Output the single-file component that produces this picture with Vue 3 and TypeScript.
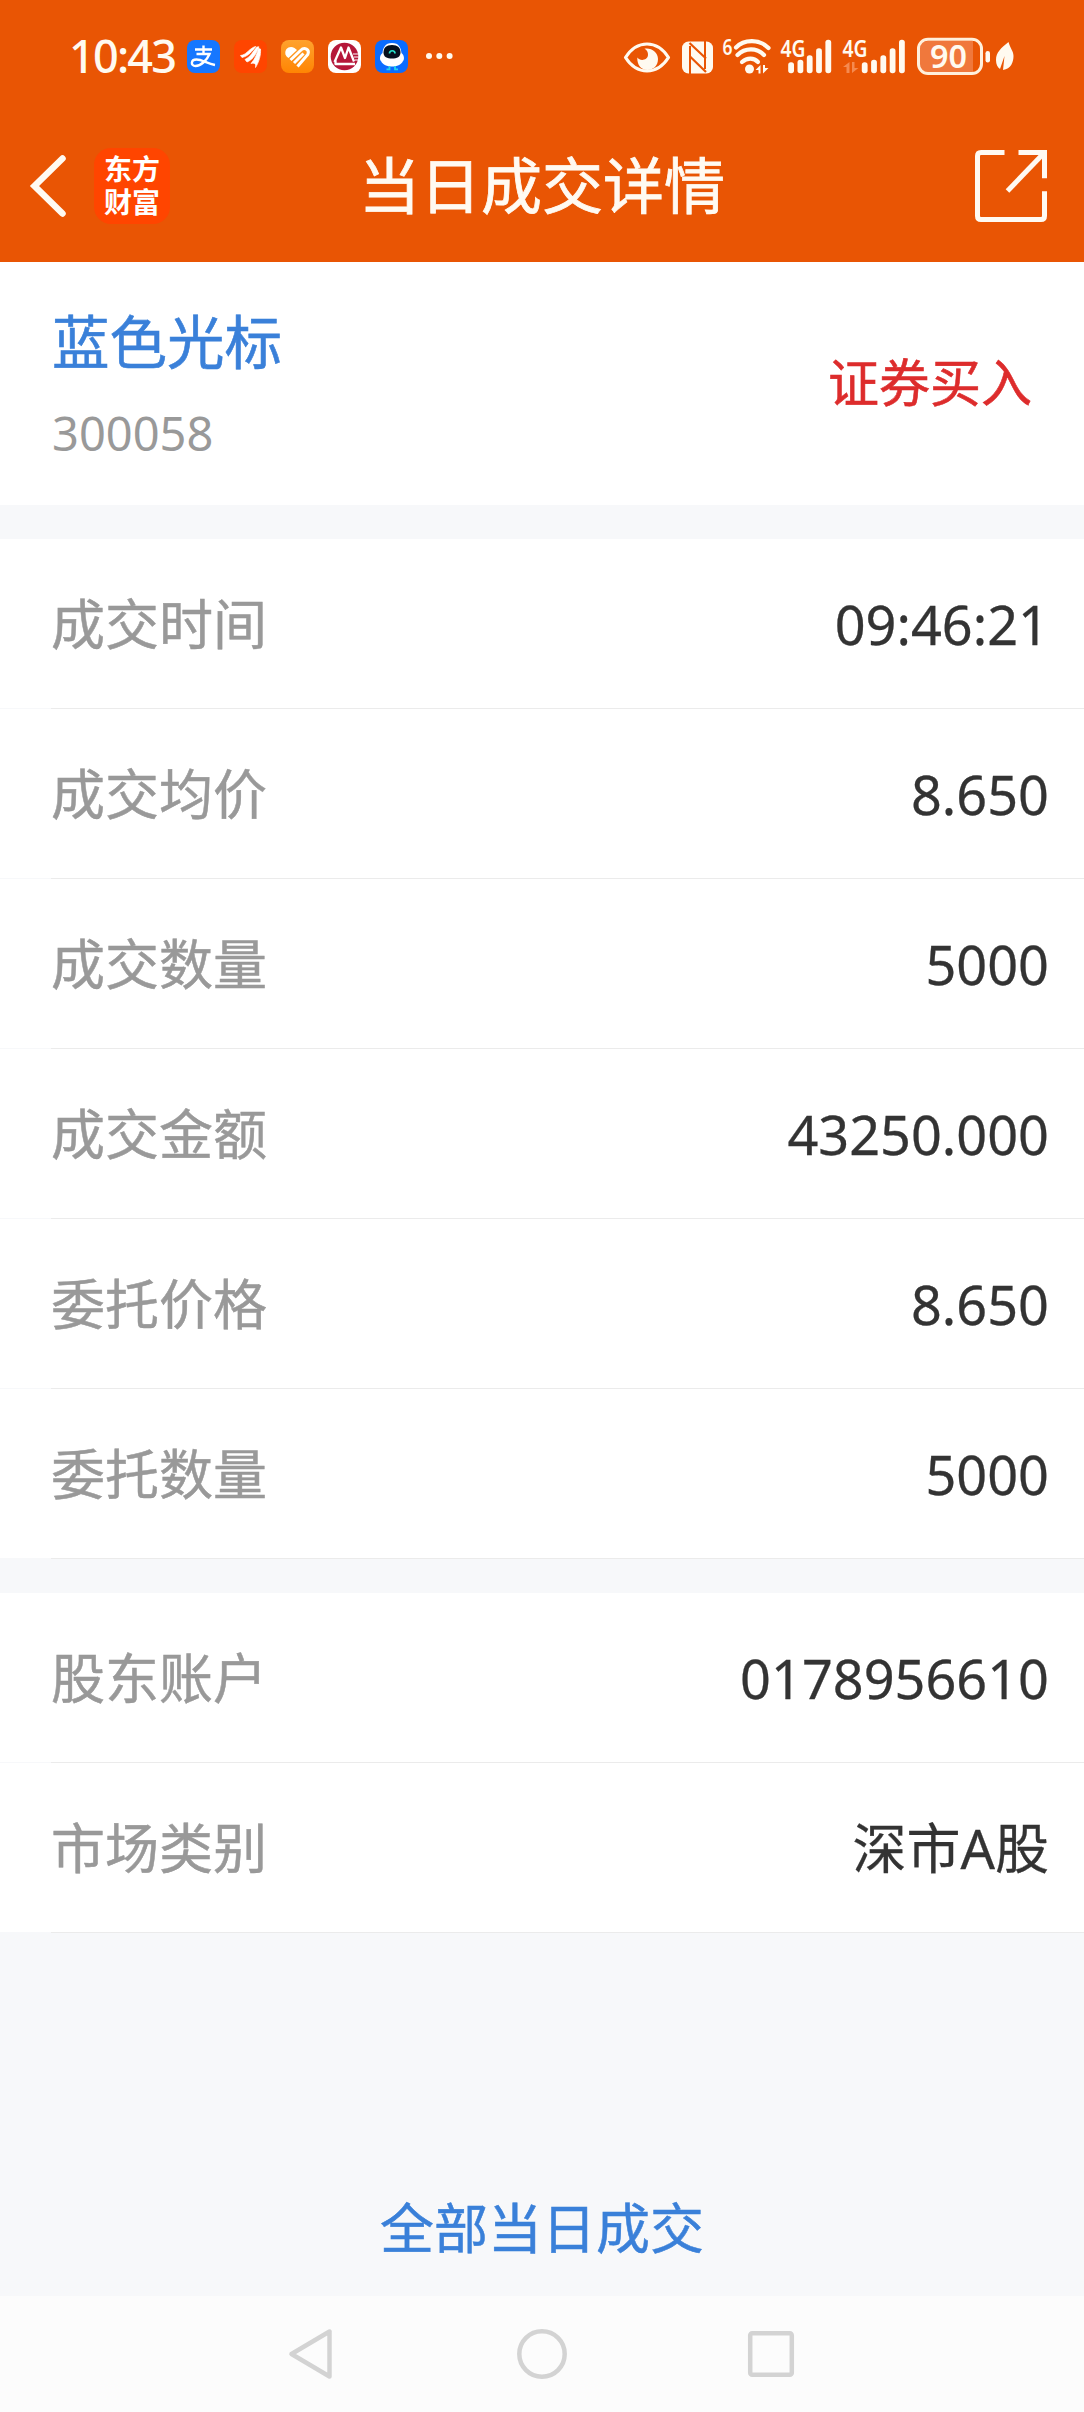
<script setup lang="ts">
interface Field {
  label: string
  value: string
}

const tradeFields: Field[] = [
  { label: '成交时间', value: '09:46:21' },
  { label: '成交均价', value: '8.650' },
  { label: '成交数量', value: '5000' },
  { label: '成交金额', value: '43250.000' },
  { label: '委托价格', value: '8.650' },
  { label: '委托数量', value: '5000' },
]

const accountFields: Field[] = [
  { label: '股东账户', value: '0178956610' },
  { label: '市场类别', value: '深市A股' },
]

const groups: Field[][] = [tradeFields, accountFields]

const barTops: number[] = [31.3, 28.7, 24.3, 17.3, 8.7]
</script>

<template>
  <div class="screen">
    <header class="top">
      <div class="status">
        <span class="time">10:43</span>
        <div class="apps">
          <svg class="app" viewBox="0 0 33 33">
            <rect width="33" height="33" rx="8" fill="#1677ff" />
            <path d="M8 9.5H25M16.5 5.5V14M9.5 14H22.5C20 20 14 26 8.5 26C3.5 26 3.5 19.5 9.5 19.5C15 19.5 20 23.5 28 25" fill="none" stroke="#fff" stroke-width="2.4" />
          </svg>
          <svg class="app" viewBox="0 0 33 33">
            <rect width="33" height="33" rx="8" fill="#ff4500" />
            <path d="M6.500 15.500C12 15 14 10 20 7L22 6.500C18 11 15 16 8 17.500ZM11 19.500C17 17 19 11 23 7L25 6.800C22.500 13 20 19 13 22ZM17 23.500C21 19 23.500 13 24.500 8.500L26.500 9C27 15 25 22 21.500 27.500C22 24.500 21.500 22.500 17 23.500Z" fill="#fff" stroke="#fff" stroke-width=".7" />
          </svg>
          <svg class="app" viewBox="0 0 33 33">
            <defs>
              <linearGradient id="gold" x1="0" y1="0" x2="0" y2="1">
                <stop offset="0" stop-color="#ffa22e" />
                <stop offset="1" stop-color="#ff8503" />
              </linearGradient>
            </defs>
            <rect width="33" height="33" rx="8" fill="url(#gold)" />
            <path d="M4.500 14.500C3 8.500 9 5 13.500 8L16 10L7.500 18C6 17 5 16 4.500 14.500Z" fill="#fff" />
            <path d="M9.500 20L19.500 10.500C23.500 6.500 29 9.500 26.800 14.500L16.500 26.500M13 23L22.500 13.500" fill="none" stroke="#fff" stroke-width="3" />
          </svg>
          <svg class="app" viewBox="0 0 33 33">
            <rect width="33" height="33" rx="8" fill="#fff" />
            <circle cx="16.500" cy="16.500" r="13.800" fill="#b5173a" />
            <path d="M6.500 22L13 7.500L17 18L20.500 7.500L26 21.500M7.500 20V24H27" fill="none" stroke="#fff" stroke-width="2.300" stroke-linejoin="round" />
            <path d="M25 14H31M26 17H31M27 20H31" stroke="#fff" stroke-width="1" />
          </svg>
          <svg class="app" viewBox="0 0 33 33">
            <rect width="33" height="33" rx="8" fill="#0a6cff" />
            <path d="M17 3C10 3 8 8 7.500 13C4.500 15 4.500 20 6 21C8 25 12 26.500 17 26.500C22 26.500 26 25 28 21C29.500 20 29.500 15 26.500 13C26 8 24 3 17 3Z" fill="#fff" />
            <path d="M17 5C11 5 8.500 8 8.500 12.500C8.500 17 12 18.500 17 18.500C22 18.500 25.500 17 25.500 12.500C25.500 8 23 5 17 5Z" fill="#06101d" />
            <path d="M14.500 13.500C14.500 9.800 20 9.800 20 13.500" fill="none" stroke="#27e0c8" stroke-width="1.700" />
            <path d="M14.500 26V29.300H11.500M20 26V29.300H23" fill="none" stroke="#22d3ee" stroke-width="1.800" />
          </svg>
        </div>
        <svg class="more" viewBox="0 0 28 8">
          <circle cx="4" cy="4" r="3" />
          <circle cx="14.300" cy="4" r="3" />
          <circle cx="24.600" cy="4" r="3" />
        </svg>

        <div class="system">
          <svg width="56" height="50" viewBox="620 30 56 50">
            <path d="M625.500 56.500C637 38.500 657 38.500 668.500 56.500C657 74.500 637 74.500 625.500 56.500Z" fill="none" stroke="#fffaf0" stroke-width="3.200" stroke-linejoin="round" />
            <path d="M644.500 47.800C651 46.500 658 51 658 58C658 65 653 69 647.500 69C641 69 637 64 637.300 56.500C640 60.500 647.500 59.500 648 54C648.200 51 646.800 49 644.500 47.800Z" fill="#fffaf0" />
          </svg>
          <svg width="42" height="50" viewBox="676 30 42 50">
            <rect x="682" y="40.500" width="31" height="32" rx="6.500" fill="#fffaf0" />
            <path d="M690 45V73M705 40V68" stroke="#e95504" stroke-width="2" />
            <path d="M689.500 42L706 57.500M690 55.500L706 71" stroke="#e95504" stroke-width="2.200" />
          </svg>
          <svg width="58" height="50" viewBox="718 30 58 50">
            <text x="722.500" y="53.500" class="label" font-size="22" textLength="10" lengthAdjust="spacingAndGlyphs">6</text>
            <g fill="none" stroke="#fffaf0" stroke-width="4.200" stroke-linecap="round">
              <path d="M736 46.500C744 38 760 38 768.500 47" />
              <path d="M737.500 54C745 46.500 757 46.500 764 54" />
              <path d="M742 61C747 56.500 754 56.500 758 61" />
            </g>
            <circle cx="749.500" cy="68" r="4.500" fill="#fffaf0" />
            <path d="M760.500 64V72.500H758.500V69H755.500ZM763 72.500V64H765V67H768.500Z" fill="#fffaf0" />
          </svg>
          <svg width="62" height="50" viewBox="776 0 62 50">
            <text x="780.500" y="26" class="label" font-size="23" textLength="25" lengthAdjust="spacingAndGlyphs">4G</text>
            <rect v-for="(t, i) in barTops" :key="i" :x="788.200 + i * 9.300" :y="t" width="5.800" :height="42.300 - t" rx="2.700" fill="#fffaf0" />
          </svg>
          <svg width="74" height="50" viewBox="838 0 74 50">
            <text x="842.500" y="26" class="label" font-size="23" textLength="25" lengthAdjust="spacingAndGlyphs">4G</text>
            <path d="M849.500 31V42H846.500V36H843ZM852 42V31H854.500V37H858.500Z" fill="#f58a50" />
            <rect v-for="(t, i) in barTops" :key="i" :x="861.800 + i * 9.300" :y="t" width="5.800" :height="42.300 - t" rx="2.700" fill="#fffaf0" />
          </svg>
          <svg width="108" height="50" viewBox="912 30 108 50">
            <path d="M973 40V71H928Q920 71 920 63V48Q920 40 928 40Z" fill="#f0783c" />
            <rect x="918.500" y="38.200" width="63" height="34.300" rx="9.500" fill="none" stroke="#fff0dc" stroke-width="3" />
            <text x="930" y="67" class="label" font-size="33" textLength="37" lengthAdjust="spacingAndGlyphs">90</text>
            <rect x="985.500" y="50" width="4.500" height="11.500" rx="2.200" fill="#fffaf0" />
            <path d="M1008.500 41C1001 47 996 51.500 996 59C996 63 997.500 66.500 1000 68L1004.500 55L1003 69C1011 68 1013.500 61 1013.500 55C1013.500 50 1010 47 1008.500 41Z" fill="#fffaf0" />
          </svg>
        </div>
      </div>

      <div class="nav">
        <div class="side">
          <svg class="back" width="40" height="64" viewBox="0 0 40 64">
            <path d="M36.500 4.500L8.500 32L36.500 59.500" fill="none" stroke="#fffaf2" stroke-width="6.500" stroke-linecap="round" />
          </svg>
          <div class="brand">东方财富</div>
        </div>
        <h1>当日成交详情</h1>
        <div class="side end">
          <svg width="72" height="72" viewBox="0 0 72 72">
            <g fill="none" stroke="#fffaf2" stroke-width="5">
              <path d="M29.500 2.500H6Q2.500 2.500 2.500 6V66Q2.500 69.500 6 69.500H66Q69.500 69.500 69.500 66V41.300" />
              <path d="M43.500 2.500H69.500V28.200" />
              <path d="M69 3L32.500 41" />
            </g>
          </svg>
        </div>
      </div>
    </header>

    <section class="stock">
      <div class="ident">
        <span class="name">蓝色光标</span>
        <span class="code">300058</span>
      </div>
      <span class="side-label">证券买入</span>
    </section>

    <section v-for="(group, g) in groups" :key="g" class="group">
      <div v-for="field in group" :key="field.label" class="row">
        <span class="key">{{ field.label }}</span>
        <span class="value">{{ field.value }}</span>
      </div>
    </section>

    <div class="footer">
      <a class="all">全部当日成交</a>
    </div>

    <nav class="system-nav">
      <svg width="50" height="56" viewBox="0 0 50 56">
        <path d="M42.500 5.500V50.500L4.500 28Z" />
      </svg>
      <svg width="56" height="56" viewBox="0 0 56 56">
        <circle cx="28" cy="28" r="22.700" />
      </svg>
      <svg width="50" height="56" viewBox="0 0 50 56">
        <rect x="4.200" y="7.200" width="41.600" height="41.600" rx="2" />
      </svg>
    </nav>
  </div>
</template>

<style>
body {
  margin: 0;
}
</style>

<style scoped>
.screen {
  display: flex;
  flex-direction: column;
  width: 1084px;
  height: 2412px;
  overflow: hidden;
  background: #f7f8fa;
  font-family: "Noto Sans", "Noto Sans CJK SC", sans-serif;
}

.top {
  height: 262px;
  background: #e95504;
}

.status {
  display: flex;
  align-items: center;
  height: 50px;
  padding: 31px 64px 0 69px;
  margin-bottom: 30px;
}

.time {
  width: 118px;
  color: #fffaf0;
  font-size: 45px;
  font-weight: 500;
  line-height: 50px;
  letter-spacing: -1.800px;
}

.apps {
  display: flex;
  gap: 14px;
}

.app {
  display: block;
  width: 33px;
  height: 33px;
}

.more {
  width: 28px;
  height: 8px;
  margin-left: 17px;
  fill: #fffaf0;
}

.system {
  display: flex;
  margin-left: auto;
}

.system svg {
  display: block;
}

.label {
  fill: #fffaf0;
  font-family: "Noto Sans", sans-serif;
  font-weight: 600;
}

.nav {
  display: flex;
  align-items: center;
  justify-content: space-between;
  height: 150px;
  padding: 0 37px 0 26px;
  box-sizing: border-box;
}

.side {
  display: flex;
  align-items: center;
  width: 200px;
}

.side.end {
  justify-content: flex-end;
  width: 189px;
}

.brand {
  width: 76px;
  height: 76px;
  margin-left: 28px;
  padding: 4px 9px 6px 10px;
  box-sizing: border-box;
  border-radius: 17px;
  background: #ff4500;
  color: #fff;
  font-family: "Noto Sans CJK SC", sans-serif;
  font-size: 28px;
  font-weight: 700;
  line-height: 33px;
}

h1 {
  margin: 0;
  color: #fffaf2;
  font-size: 61px;
  font-weight: 400;
  line-height: 80px;
  -webkit-text-stroke: 0.800px #fffaf2;
}

.stock {
  display: flex;
  align-items: center;
  justify-content: space-between;
  height: 243px;
  padding: 0 52px 0 52px;
  margin-bottom: 34px;
  box-sizing: border-box;
  background: #fff;
}

.ident {
  display: flex;
  flex-direction: column;
  padding-top: 8px;
}

.name {
  color: #3a80d9;
  font-size: 57.500px;
  line-height: 92px;
  -webkit-text-stroke: 0.600px #3a80d9;
}

.code {
  color: #999;
  font-size: 47px;
  line-height: 91px;
}

.side-label {
  padding-bottom: 3px;
  color: #dd2c2c;
  font-size: 51px;
  line-height: 60px;
  -webkit-text-stroke: 0.600px #dd2c2c;
}

.group {
  margin-bottom: 34px;
}

.row {
  display: flex;
  align-items: center;
  justify-content: space-between;
  height: 170px;
  padding: 0 35px 1px 51px;
  box-sizing: border-box;
  background: linear-gradient(#ebebeb, #ebebeb) 51px 100% / 100% 1px no-repeat,
    linear-gradient(#fff, #fff) 0 0 / 100% 169px no-repeat,
    #f7f8fa;
}

.key {
  color: #999;
  font-size: 54px;
  line-height: 80px;
  -webkit-text-stroke: 0.500px #999;
}

.value {
  color: #333;
  font-size: 54px;
  line-height: 80px;
  -webkit-text-stroke: 0.300px #333;
}

.footer {
  display: flex;
  flex: 1;
  align-items: flex-end;
  justify-content: center;
}

.all {
  margin-bottom: 28px;
  color: #3a80d9;
  font-size: 54px;
  line-height: 80px;
  -webkit-text-stroke: 0.500px #3a80d9;
}

.system-nav {
  display: flex;
  align-items: center;
  justify-content: space-between;
  height: 116px;
  padding: 0 288px 0 287px;
  background: #fcfcfc;
}

.system-nav svg {
  display: block;
  fill: none;
  stroke: #d3d3d3;
  stroke-width: 4.500px;
  stroke-linejoin: round;
}
</style>
